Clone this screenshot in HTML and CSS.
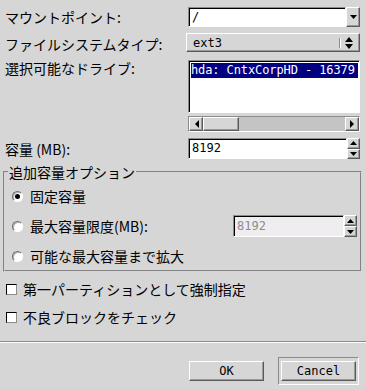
FILE: index.html
```html
<!DOCTYPE html>
<html lang="ja">
<head>
    <meta charset="utf-8" />
    <title>パーティションの追加</title>
    <link rel="stylesheet" href="styles.css">
</head>
<body>
    <div class="dialog">
        <div class="form">
            <div class="label">マウントポイント:</div>
            <div class="combo">
                <div class="entry">/</div>
                <div class="raised arrow-btn">
                    <svg width="7" height="4" viewBox="0 0 7 4"><path d="M0 0h7L3.5 4z"/></svg>
                </div>
            </div>

            <div class="label">ファイルシステムタイプ:</div>
            <div class="raised optmenu">
                <span class="mono">ext3</span>
                <svg class="indicator" width="16" height="14" viewBox="0 0 16 14">
                    <rect x="0" y="2" width="1" height="10" fill="#8c8c8c"/>
                    <rect x="1" y="2" width="1" height="10" fill="#fff"/>
                    <path d="M6 6h8L10 1z M6 8h8l-4 5z"/>
                </svg>
            </div>

            <div class="label label-top">選択可能なドライブ:</div>
            <div class="drives">
                <div class="sunken list">
                    <div class="row selected mono">hda: CntxCorpHD - 16379</div>
                </div>
                <div class="scrollbar">
                    <div class="raised sb-btn">
                        <svg width="5" height="8" viewBox="0 0 5 8"><path d="M5 0v8L1 4z"/></svg>
                    </div>
                    <div class="raised thumb"></div>
                    <div class="trough"></div>
                    <div class="raised sb-btn">
                        <svg width="5" height="8" viewBox="0 0 5 8"><path d="M0 0v8l4-4z"/></svg>
                    </div>
                </div>
            </div>

            <div class="label">容量 (MB):</div>
            <div class="spin">
                <div class="sunken spin-entry mono">8192</div>
                <div class="spin-arrows">
                    <div class="raised half"><svg width="7" height="4" viewBox="0 0 7 4"><path d="M0 4h7L3.5 0z"/></svg></div>
                    <div class="raised half"><svg width="7" height="4" viewBox="0 0 7 4"><path d="M0 0h7L3.5 4z"/></svg></div>
                </div>
            </div>
        </div>

        <fieldset class="group">
            <legend>追加容量オプション</legend>
            <div class="radio-row">
                <span class="radio checked"></span>
                <span>固定容量</span>
            </div>
            <div class="radio-row">
                <span class="radio"></span>
                <span>最大容量限度(MB):</span>
                <div class="spin spin-disabled">
                    <div class="sunken spin-entry mono">8192</div>
                    <div class="spin-arrows">
                        <div class="raised half"><svg width="7" height="4" viewBox="0 0 7 4"><path d="M0 4h7L3.5 0z"/></svg></div>
                        <div class="raised half"><svg width="7" height="4" viewBox="0 0 7 4"><path d="M0 0h7L3.5 4z"/></svg></div>
                    </div>
                </div>
            </div>
            <div class="radio-row">
                <span class="radio"></span>
                <span>可能な最大容量まで拡大</span>
            </div>
        </fieldset>

        <div class="checks">
            <div class="check-row">
                <span class="checkbox"></span>
                <span>第一パーティションとして強制指定</span>
            </div>
            <div class="check-row">
                <span class="checkbox"></span>
                <span>不良ブロックをチェック</span>
            </div>
        </div>

        <div class="separator"></div>

        <div class="buttons">
            <button class="raised button mono">OK</button>
            <div class="default-frame">
                <button class="raised button mono">Cancel</button>
            </div>
        </div>
    </div>
</body>
</html>
```

FILE: styles.css
```css
body {
    margin: 0;
    background: #d6d6d6;
    color: #000;
    font-family: "Noto Sans CJK JP", sans-serif;
    font-size: 14px;
    line-height: 16px;
}

.dialog {
    width: 366px;
    height: 389px;
    display: flex;
    flex-direction: column;
}

.mono {
    font-family: "DejaVu Sans Mono", monospace;
    font-size: 12px;
}

.raised {
    box-sizing: border-box;
    background: #d6d6d6;
    border: 1px solid;
    border-color: #fff #5a5a5a #5a5a5a #fff;
    box-shadow: inset -1px -1px 0 #9a9a9a;
}

.sunken {
    box-sizing: border-box;
    background: #fff;
    border: 1px solid;
    border-color: #8c8c8c #fff #fff #8c8c8c;
    box-shadow: inset 1px 1px 0 #000;
}

.form {
    display: grid;
    grid-template-columns: 181px 174px;
    grid-template-rows: 20px 21px 72px 21px;
    row-gap: 6px;
    padding: 7px 0 0 5px;
    align-items: center;
}

.label-top {
    align-self: start;
}

.combo {
    display: flex;
    margin-left: 2px;
    height: 20px;
}

.entry {
    flex: 1;
    box-sizing: border-box;
    background: #fff;
    border: 1px solid;
    border-color: #8c8c8c #fff #fff #8c8c8c;
    box-shadow: inset 1px 1px 0 #000;
    font-family: "DejaVu Sans Mono", monospace;
    font-size: 12px;
    line-height: 18px;
    padding-left: 3px;
}

.arrow-btn {
    width: 14px;
    display: flex;
    align-items: center;
    justify-content: center;
}

.optmenu {
    align-self: start;
    height: 19px;
    display: flex;
    align-items: center;
    justify-content: space-between;
    padding: 0 4px 0 6px;
}

.indicator {
    display: block;
}

.drives {
    display: flex;
    flex-direction: column;
    gap: 3px;
    margin-left: 2px;
    height: 72px;
}

.list {
    height: 53px;
    padding: 2px 1px 0 2px;
    overflow: hidden;
}

.row {
    height: 15px;
    line-height: 15px;
    white-space: nowrap;
    overflow: hidden;
    letter-spacing: -0.1px;
}

.selected {
    background: #000080;
    color: #fff;
}

.scrollbar {
    height: 16px;
    box-sizing: border-box;
    display: flex;
    background: #c4c4c4;
    border: 1px solid;
    border-color: #8c8c8c #fff #fff #8c8c8c;
}

.sb-btn {
    width: 14px;
    display: flex;
    align-items: center;
    justify-content: center;
}

.thumb {
    width: 36px;
}

.trough {
    flex: 1;
}

.spin {
    display: flex;
    height: 21px;
    margin-left: 2px;
}

.spin-entry {
    flex: 1;
    line-height: 19px;
    padding-left: 3px;
}

.spin-arrows {
    width: 13px;
    display: flex;
    flex-direction: column;
}

.half {
    flex: 1;
    display: flex;
    align-items: center;
    justify-content: center;
}

.group {
    margin: 5px 4px 0 3px;
    padding: 2px 3px 0 7px;
    border: 2px groove #d6d6d6;
    display: flex;
    flex-direction: column;
    gap: 2px;
}

.group legend {
    margin-left: -4px;
    padding: 0 1px;
    line-height: 16px;
}

.radio-row {
    height: 28px;
    display: flex;
    align-items: center;
    gap: 7px;
}

.radio {
    width: 11px;
    height: 11px;
    box-sizing: border-box;
    border-radius: 50%;
    border: 1px solid;
    border-color: #6a6a6a #fff #fff #6a6a6a;
    background: #fff;
    box-shadow: inset 1px 1px 0 #b0b0b0;
    display: flex;
    align-items: center;
    justify-content: center;
}

.radio.checked::after {
    content: "";
    width: 5px;
    height: 5px;
    border-radius: 50%;
    background: #000;
}

.spin-disabled {
    margin-left: auto;
    width: 124px;
    height: 22px;
}

.spin-disabled .spin-entry {
    background: #efedef;
    color: #8c8c8c;
    line-height: 20px;
}

.checks {
    display: flex;
    flex-direction: column;
    gap: 4px;
    margin-top: 5px;
}

.check-row {
    height: 24px;
    display: flex;
    align-items: center;
    gap: 6px;
    padding-left: 6px;
}

.checkbox {
    width: 11px;
    height: 11px;
    box-sizing: border-box;
    background: #fff;
    border: 1px solid;
    border-color: #000 #8c8c8c #8c8c8c #000;
}

.separator {
    margin-top: 12px;
    border-top: 1px solid #8c8c8c;
    border-bottom: 1px solid #fff;
}

.buttons {
    display: flex;
    justify-content: flex-end;
    align-items: center;
    gap: 14px;
    padding: 14px 7px 0 0;
}

.button {
    width: 75px;
    height: 20px;
    padding: 0;
    color: #000;
    font-weight: normal;
    cursor: pointer;
}

.default-frame {
    box-sizing: border-box;
    padding: 3px 2px;
    border: 1px solid;
    border-color: #8c8c8c #fff #fff #8c8c8c;
}
```
